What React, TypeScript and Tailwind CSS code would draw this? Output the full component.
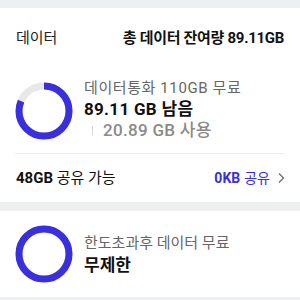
const BLUE = "#3a2fdc";

const Donut = ({ used }: { used: number }) => {
  const r = 25;
  const c = 2 * Math.PI * r;
  const blue = c * (1 - used);
  return (
    <svg width="58" height="58" viewBox="0 0 58 58" className="shrink-0">
      <circle cx="29" cy="29" r={r} fill="none" stroke="#e8e8ea" strokeWidth="7" />
      <circle
        cx="29"
        cy="29"
        r={r}
        fill="none"
        stroke={BLUE}
        strokeWidth="7"
        strokeDasharray={`${blue} ${c}`}
        transform="rotate(-90 29 29)"
      />
    </svg>
  );
};

export default function App() {
  return (
    <div
      className="w-[300px] h-[300px] overflow-hidden bg-white text-[#111]"
      style={{ fontFamily: 'Roboto, "Noto Sans CJK KR", sans-serif' }}
    >
      <div className="h-[8px] bg-[#eeeff1]" />

      <div className="h-[60px] px-4 flex items-center justify-between">
        <span className="text-[15px] text-[#222]">데이터</span>
        <span className="text-[15px] font-bold tracking-[-0.3px]">총 데이터 잔여량 89.11GB</span>
      </div>

      <div className="px-[15px]">
        <div className="pt-[14px] pb-[13px] flex items-center gap-[11px] border-b border-[#ececec]">
          <Donut used={20.89 / 110} />
          <div className="flex flex-col -mt-[4px]">
            <span className="text-[15px] text-[#666] leading-[20px] tracking-[0.6px]">데이터통화 110GB 무료</span>
            <span className="text-[17px] font-bold leading-[22px] tracking-[0.3px]">89.11 GB 남음</span>
            <span className="flex items-center text-[17px] font-medium text-[#8a8a8a] leading-[20px] tracking-[0.3px]">
              <span className="w-px h-[9px] bg-[#d6d6d6] ml-[8px] mr-[10px]" />
              20.89 GB 사용
            </span>
          </div>
        </div>
      </div>

      <div className="h-[48px] pl-4 pr-[14px] flex items-center justify-between">
        <span className="text-[15px]">
          <span className="font-bold">48GB</span> 공유 가능
        </span>
        <span className="flex items-center text-[14px]" style={{ color: BLUE }}>
          <span className="font-bold">0KB</span>
          <span className="ml-1">공유</span>
          <svg width="9" height="12" viewBox="0 0 9 12" className="ml-[7px]">
            <polyline points="2,1.5 6.5,6 2,10.5" fill="none" stroke="#666" strokeWidth="1.2" />
          </svg>
        </span>
      </div>

      <div className="h-[9px] bg-[#eeeff1]" />

      <div className="px-[15px] pt-[14px] pb-[14px] flex items-center gap-[11px]">
        <Donut used={0} />
        <div className="flex flex-col">
          <span className="text-[15px] text-[#666] leading-[22px]">한도초과후 데이터 무료</span>
          <span className="text-[17px] font-bold leading-[22px]">무제한</span>
        </div>
      </div>

      <div className="h-[10px] bg-[#eeeff1]" />
    </div>
  );
}
